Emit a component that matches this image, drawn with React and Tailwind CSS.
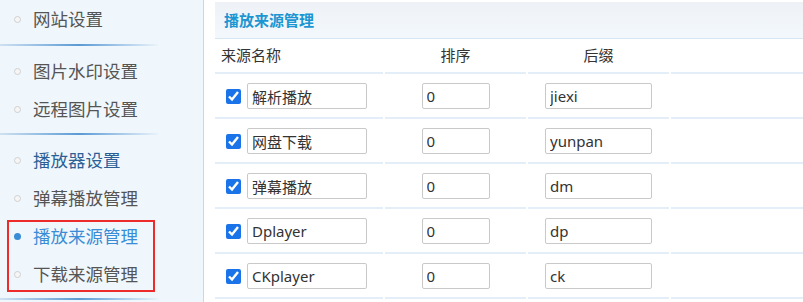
const groups = [
  [{ label: "网站设置" }],
  [{ label: "图片水印设置" }, { label: "远程图片设置" }],
  [
    { label: "播放器设置", tone: "dark" },
    { label: "弹幕播放管理" },
    { label: "播放来源管理", tone: "active", marked: true },
    { label: "下载来源管理", marked: true },
  ],
]

const sources = [
  { name: "解析播放", sort: "0", suffix: "jiexi" },
  { name: "网盘下载", sort: "0", suffix: "yunpan" },
  { name: "弹幕播放", sort: "0", suffix: "dm" },
  { name: "Dplayer", sort: "0", suffix: "dp" },
  { name: "CKplayer", sort: "0", suffix: "ck" },
]

const font = { fontFamily: '"Noto Sans", "Noto Sans CJK SC", sans-serif' }

function NavItem({ item }) {
  const color =
    item.tone === "active" ? "text-[#3a8cd6]" : item.tone === "dark" ? "text-[#2c5f96]" : "text-[#555]"
  return (
    <div className={`flex h-[38px] items-center pl-[14px] text-[17.5px] ${color}`}>
      <span
        className={`mr-[12px] h-[7px] w-[7px] rounded-full ${
          item.tone === "active" ? "bg-[#3a8cd6]" : "border border-[#cfcfcf] bg-[#f6f6f6]"
        }`}
      />
      {item.label}
    </div>
  )
}

function Divider() {
  return <div className="h-[2px] w-[158px] bg-gradient-to-r from-[#cfe1f1] via-[#5a9ad4] to-[#eaf3fa]" />
}

function Sidebar() {
  return (
    <div className="w-[204px] shrink-0 border-r border-[#c8d8e6] bg-[#f0f7fc]">
      {groups.map((group, gi) => {
        const plain = group.filter((i) => !i.marked)
        const marked = group.filter((i) => i.marked)
        return (
          <div key={gi}>
            <div className={gi === 0 ? "pb-[6px]" : "pt-[6px] pb-[5px]"}>
              {plain.map((item) => (
                <NavItem key={item.label} item={item} />
              ))}
              {marked.length > 0 && (
                <div className="relative">
                  {marked.map((item) => (
                    <NavItem key={item.label} item={item} />
                  ))}
                  <div className="pointer-events-none absolute top-[3px] bottom-[1px] left-[7px] w-[148px] border-2 border-[#ee2b2b]" />
                </div>
              )}
            </div>
            <Divider />
          </div>
        )
      })}
    </div>
  )
}

function Field({ value, width }) {
  return (
    <input
      readOnly
      value={value}
      className={`h-[26px] ${width} rounded-[2px] border border-[#c9c9c9] bg-white px-[4px] text-[15px] text-[#333] outline-none`}
    />
  )
}

function SourceTable() {
  const cell = "border-b-2 border-[#e4eef8]"
  return (
    <div className="grid grid-cols-[168px_141px_141px_1fr] gap-x-[2px] text-[15px] text-[#333]">
      <div className={`${cell} flex h-[35px] items-end pb-[6px] pl-[6px]`}>来源名称</div>
      <div className={`${cell} flex h-[35px] items-end justify-center pb-[6px]`}>排序</div>
      <div className={`${cell} flex h-[35px] items-end justify-center pb-[6px]`}>后缀</div>
      <div className={`${cell} h-[35px]`} />
      {sources.map((s) => (
        <div key={s.name} className="contents">
          <div className={`${cell} flex h-[45px] items-center pl-[11px] pt-[1px]`}>
            <input type="checkbox" defaultChecked className="mr-[6px] h-[15px] w-[15px] accent-[#1a73e8]" />
            <Field value={s.name} width="w-[120px]" />
          </div>
          <div className={`${cell} flex h-[45px] items-center justify-center pt-[1px]`}>
            <Field value={s.sort} width="w-[68px]" />
          </div>
          <div className={`${cell} flex h-[45px] items-center justify-center pt-[1px]`}>
            <Field value={s.suffix} width="w-[107px]" />
          </div>
          <div className={`${cell} h-[45px]`} />
        </div>
      ))}
    </div>
  )
}

export default function App() {
  return (
    <div className="flex h-[302px] w-[803px] overflow-hidden bg-white" style={font}>
      <Sidebar />
      <div className="ml-[11px] flex-1 pt-[2px]">
        <div className="flex h-[37px] items-center border-b border-[#d6e6f2] bg-gradient-to-b from-[#eef2f7] to-[#f3f8fc] pl-[9px] text-[15px] font-bold text-[#1b96d2]">
          播放来源管理
        </div>
        <SourceTable />
      </div>
    </div>
  )
}
